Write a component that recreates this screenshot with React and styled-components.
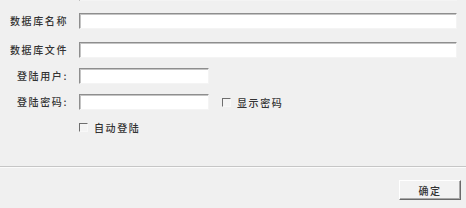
import React from 'react';
import styled, { createGlobalStyle } from 'styled-components';

const GlobalStyle = createGlobalStyle`
    html, body {
        margin: 0;
        padding: 0;
        background: #f0f0f0;
        overflow: hidden;
    }
    body {
        font-family: "Noto Sans CJK SC", "Noto Sans", sans-serif;
    }
`;

const DialogSC = styled.div`
    width: 466px;
    height: 208px;
    display: flex;
    flex-direction: column;
    background: #f0f0f0;
    overflow: hidden;
`;

const FormSC = styled.div`
    display: flex;
    flex-direction: column;
`;

const RowSC = styled.div`
    display: flex;
    align-items: center;
    height: 16px;
    margin-top: ${p => p.$top}px;
`;

const LabelSC = styled.span`
    width: 68px;
    margin-right: 11px;
    text-align: right;
    font-size: 10px;
    font-weight: 500;
    letter-spacing: 1.6px;
    color: #333333;
    white-space: nowrap;
    line-height: 16px;
`;

const InputSC = styled.div`
    box-sizing: border-box;
    width: ${p => p.$w}px;
    height: 16px;
    background: #ffffff;
    border-top: 1px solid #8e8e8e;
    border-left: 1px solid #8e8e8e;
    border-right: 1px solid #f4f4f4;
    border-bottom: 1px solid #f4f4f4;
    box-shadow: inset 1px 1px 0 #c4c4c4;
`;

const CheckSC = styled.label`
    display: flex;
    align-items: center;
    gap: 6px;
    margin-left: ${p => p.$left || 0}px;
    font-size: 10px;
    font-weight: 500;
    letter-spacing: 1.6px;
    color: #333333;
    white-space: nowrap;
`;

const BoxSC = styled.span`
    box-sizing: border-box;
    width: 9px;
    height: 9px;
    background: #f4f4f4;
    border-top: 1px solid #6e6e6e;
    border-left: 1px solid #6e6e6e;
    border-right: 1px solid #f8f8f8;
    border-bottom: 1px solid #f8f8f8;
`;

const SeparatorSC = styled.div`
    margin-top: 31px;
    height: 1px;
    background: #c6c6c6;
    border-bottom: 1px solid #fbfbfb;
`;

const FooterSC = styled.div`
    display: flex;
    justify-content: flex-end;
    padding: 12px 5px 0 0;
`;

const ButtonSC = styled.button`
    box-sizing: border-box;
    width: 62px;
    height: 20px;
    padding: 0;
    background: #f2f2f2;
    border-top: 1px solid #ffffff;
    border-left: 1px solid #ffffff;
    border-right: 1px solid #6a6a6a;
    border-bottom: 1px solid #6a6a6a;
    box-shadow: inset -1px -1px 0 #a8a8a8;
    font-family: "Noto Sans CJK SC", sans-serif;
    font-size: 10px;
    font-weight: 500;
    letter-spacing: 1.6px;
    color: #333333;
`;

const App = () => {
    return (
        <DialogSC>
            <GlobalStyle />
            <FormSC>
                <RowSC $top={-15}>
                    <LabelSC />
                    <InputSC $w={378} />
                </RowSC>
                <RowSC $top={12}>
                    <LabelSC>数据库名称</LabelSC>
                    <InputSC $w={378} />
                </RowSC>
                <RowSC $top={13}>
                    <LabelSC>数据库文件</LabelSC>
                    <InputSC $w={378} />
                </RowSC>
                <RowSC $top={10}>
                    <LabelSC>登陆用户:</LabelSC>
                    <InputSC $w={130} />
                </RowSC>
                <RowSC $top={10}>
                    <LabelSC>登陆密码:</LabelSC>
                    <InputSC $w={130} />
                    <CheckSC $left={13}>
                        <BoxSC />
                        显示密码
                    </CheckSC>
                </RowSC>
                <RowSC $top={9}>
                    <LabelSC />
                    <CheckSC>
                        <BoxSC />
                        自动登陆
                    </CheckSC>
                </RowSC>
            </FormSC>

            <SeparatorSC />

            <FooterSC>
                <ButtonSC>确定</ButtonSC>
            </FooterSC>
        </DialogSC>
    );
};

export default App;
